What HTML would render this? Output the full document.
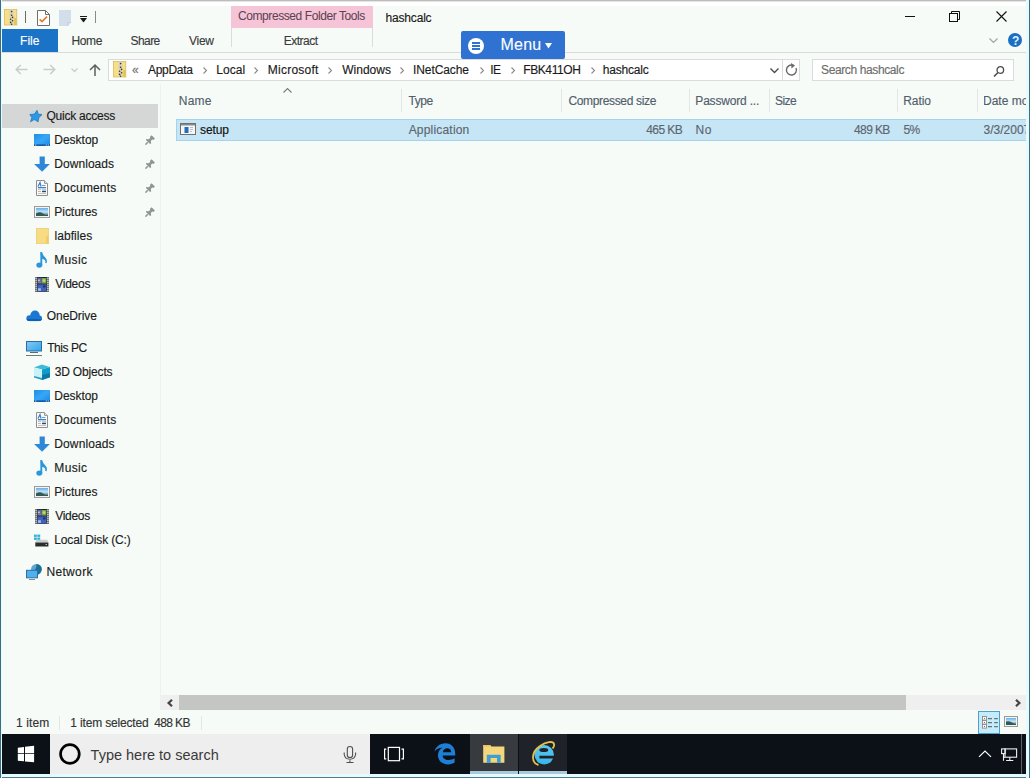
<!DOCTYPE html>
<html><head><meta charset="utf-8">
<style>
*{box-sizing:border-box;margin:0;padding:0}
html,body{width:1030px;height:778px;overflow:hidden;background:#f6fbf8;font-family:"Liberation Sans",sans-serif;font-size:12px;color:#1e1e1e}
.a{position:absolute;white-space:nowrap}
.t{position:absolute;white-space:nowrap;line-height:1;font-size:11.5px;-webkit-text-stroke:0.15px currentColor}
svg{position:absolute;overflow:visible}
.nv{color:#1b1b1b}
.hd{color:#4d5f73}
.sep{position:absolute;width:1px;background:#e3e6e5}
</style></head><body>
<svg width="0" height="0" style="position:absolute;left:0;top:0">
<defs>
<linearGradient id="g-sky" x1="0" y1="0" x2="0" y2="1"><stop offset="0" stop-color="#5fb0f0"/><stop offset="0.5" stop-color="#c9e3f4"/><stop offset="1" stop-color="#2f5a55"/></linearGradient>
<linearGradient id="g-desk" x1="0" y1="0" x2="1" y2="1"><stop offset="0" stop-color="#1f8fe8"/><stop offset="0.5" stop-color="#36a6f6"/><stop offset="1" stop-color="#1d86e2"/></linearGradient>
<linearGradient id="g-scr" x1="0" y1="0" x2="1" y2="1"><stop offset="0" stop-color="#8cc8f2"/><stop offset="1" stop-color="#2aa6ee"/></linearGradient>
<symbol id="i-star" viewBox="0 0 16 16"><path d="M11 2.3L12.4 6.2L16.2 6.5L12.9 9.6L12.1 13.8L8.3 11.6L4.5 13.8L5.8 9.5L3.8 6.5L8.4 6.1Z" fill="#2a98e4" stroke="#1b73bf" stroke-width="0.7"/><path d="M5.5 4.5L8 3" stroke="#a6cbe8" stroke-width="0.8"/></symbol>
<symbol id="i-desktop" viewBox="0 0 16 16"><rect x="0" y="2" width="16" height="12" fill="url(#g-desk)"/><rect x="0" y="12.4" width="16" height="1.6" fill="#105aa6"/><rect x="1.3" y="12.6" width="1" height="1" fill="#d8f0ff"/><rect x="11.8" y="12.6" width="1" height="1" fill="#d8f0ff"/><rect x="13.8" y="12.6" width="1" height="1" fill="#d8f0ff"/></symbol>
<symbol id="i-down" viewBox="0 0 16 16"><path d="M5.6 0.4H10.8V8H15.9L8.1 15.8L0.1 8H5.6Z" fill="#2d88d8"/></symbol>
<symbol id="i-docs" viewBox="0 0 16 16"><path d="M2.5 0.5H10.5L13.5 3.5V15.5H2.5Z" fill="#fbfbfb" stroke="#8f8f8f"/><path d="M10.5 0.5V3.5H13.5" fill="#e0e0e0" stroke="#9f9f9f"/><path d="M4 6.5L6 2.5L7 6.5" fill="none" stroke="#3a7fc0" stroke-width="1.2"/><rect x="8" y="5" width="3.5" height="1" fill="#6aa0d0"/><rect x="4" y="7" width="8" height="1.3" fill="#3a80bd"/><rect x="4" y="9.2" width="3" height="0.9" fill="#a9bdcc"/><rect x="8" y="9.2" width="4" height="0.9" fill="#a9bdcc"/><rect x="4" y="11" width="3" height="0.9" fill="#d0a8a0"/><rect x="8" y="10.7" width="4" height="1.5" fill="#26506c"/><rect x="4" y="13" width="8" height="0.8" fill="#b5b5b5"/></symbol>
<symbol id="i-pics" viewBox="0 0 16 16"><rect x="0.5" y="2.5" width="15" height="11" fill="#f4f4f4" stroke="#9a9a9a"/><rect x="2" y="4" width="12" height="8" fill="url(#g-sky)"/><path d="M2 9.5Q6 7 9 9.5T14 10.5V12H2Z" fill="#2f5a55"/></symbol>
<symbol id="i-folder" viewBox="0 0 16 16"><rect x="2.3" y="0.3" width="12.2" height="15.5" fill="#f8dc84" stroke="#e9c766" stroke-width="0.6"/><path d="M12.2 8.5L14.5 6.8V15.8H12.2Z" fill="#efcc62"/></symbol>
<symbol id="i-music" viewBox="0 0 16 16"><ellipse cx="5.3" cy="13.1" rx="3" ry="2.7" fill="#2a96dc"/><path d="M7.3 13.5V0.3" stroke="#2a96dc" stroke-width="1.9"/><path d="M6.4 0.3H8Q9 3.5 11.3 5.5Q13.8 7.8 12.5 11.2L11.2 11Q12 8.8 10 7.6Q8.6 6.8 7.3 6.4Z" fill="#2a96dc"/></symbol>
<symbol id="i-videos" viewBox="0 0 16 16"><rect x="1" y="1" width="14" height="14.8" fill="#1b2230"/><rect x="1" y="1" width="2.2" height="14.8" fill="#737a74"/><rect x="12.8" y="1" width="2.2" height="14.8" fill="#737a74"/><g fill="#e8e8e8"><rect x="1.6" y="2" width="1" height="1"/><rect x="1.6" y="4" width="1" height="1"/><rect x="1.6" y="6" width="1" height="1"/><rect x="1.6" y="8" width="1" height="1"/><rect x="1.6" y="10" width="1" height="1"/><rect x="1.6" y="12" width="1" height="1"/><rect x="1.6" y="14" width="1" height="1"/><rect x="13.4" y="2" width="1" height="1"/><rect x="13.4" y="4" width="1" height="1"/><rect x="13.4" y="6" width="1" height="1"/><rect x="13.4" y="8" width="1" height="1"/><rect x="13.4" y="10" width="1" height="1"/><rect x="13.4" y="12" width="1" height="1"/><rect x="13.4" y="14" width="1" height="1"/></g><rect x="3.6" y="1.8" width="4.2" height="5.8" fill="#5a6c9a"/><rect x="3.9" y="3.5" width="2" height="1.5" fill="#b8c0e0"/><rect x="3.9" y="5.5" width="3" height="1.2" fill="#c07080"/><rect x="7.8" y="2" width="4.6" height="5.6" fill="#7aa048"/><circle cx="10" cy="4.6" r="1.5" fill="#b5d87a"/><rect x="3.6" y="8.4" width="8.8" height="6.8" fill="#3d62c0"/><rect x="3.9" y="12.3" width="3" height="2.5" fill="#a8c0f0"/><rect x="9" y="9.5" width="2.5" height="1.8" fill="#1c2a60"/></symbol>
<symbol id="i-cloud" viewBox="0 0 16 16"><g fill="#1a78d2"><circle cx="3.3" cy="10.2" r="2.9"/><circle cx="9" cy="7.3" r="4.7"/><circle cx="13.2" cy="10.3" r="2.8"/><rect x="3.3" y="9" width="9.9" height="4.1"/></g><path d="M0.5 11A2.9 2.9 0 0 0 3.3 13.1H13.2A2.8 2.8 0 0 0 15.9 11Z" fill="#0f5fb4"/></symbol>
<symbol id="i-pc" viewBox="0 0 16 16"><rect x="0.5" y="1.5" width="15" height="9.5" fill="url(#g-scr)" stroke="#2d6e9e"/><rect x="4" y="12" width="8" height="1" fill="#5a6a74"/><rect x="0" y="15" width="16" height="1.2" fill="#707a7a"/></symbol>
<symbol id="i-cube" viewBox="0 0 16 16"><path d="M0 3.5L7.8 0.5L16 3L8 5.5Z" fill="#3fbad6"/><path d="M0 3.5L8 5.5V16L0 13.5Z" fill="#c8f2fa"/><path d="M16 3L8 5.5V16L16 13.2Z" fill="#0f9ccb"/><path d="M8 11L16 9V13.2L8 16Z" fill="#0b78a6"/><path d="M0 12L8 14V16L0 13.5Z" fill="#2aa0c0"/></symbol>
<symbol id="i-disk" viewBox="0 0 16 16"><g fill="#2cb3d8"><rect x="0" y="2.6" width="2.8" height="2.3"/><rect x="3.3" y="2.6" width="2.9" height="2.3"/><rect x="0" y="5.5" width="2.8" height="2.4"/><rect x="3.3" y="5.5" width="2.9" height="2.4"/></g><path d="M2.5 7.8H13.2L14.4 10.5H1.3Z" fill="#c9cdcb"/><rect x="1.3" y="10.5" width="13.1" height="4" fill="#2a2f2e"/><rect x="11.5" y="12" width="1.5" height="1" fill="#9fd38a"/></symbol>
<symbol id="i-network" viewBox="0 0 16 16"><circle cx="10.4" cy="5.4" r="5.4" fill="#5aa7d2"/><path d="M10.4 0A5.4 5.4 0 0 1 15.8 5.4Q15 9 12 10.5L9 6Q11 3 10.4 0Z" fill="#1f6f93"/><rect x="0.5" y="6.3" width="11" height="7.5" fill="#4fb0ef" stroke="#2a6fa6"/><rect x="3" y="15" width="6" height="1" fill="#7c8d99"/></symbol>
<symbol id="i-pin" viewBox="0 0 10 10"><path d="M6.6 0.3L9.9 3.5L8.2 5L7.2 4.6L5.8 6.1L6.2 8.3L5.1 9L0.9 4.9L1.5 3.9L3.8 4.3L5.3 2.8L5 1.8Z" fill="#8b9794"/><path d="M2.8 7.2L0.4 9.6" stroke="#8b9794" stroke-width="1.5"/></symbol>
</defs></svg>

<!-- window borders -->
<div class="a" style="left:0;top:0;width:1030px;height:1px;background:#bdbdbd"></div>
<div class="a" style="left:0;top:1px;width:1030px;height:1px;background:#e4e4e4"></div>
<div class="a" style="left:0;top:2px;width:1030px;height:4px;background:#ffffff"></div>

<!-- ===== TITLE BAR ===== -->
<!-- zip icon -->
<svg style="left:4px;top:9px" width="14" height="17" viewBox="0 0 14 17">
 <rect x="0.4" y="0.4" width="12.4" height="15.6" fill="#f7de88" stroke="#d8bd5c" stroke-width="0.8"/>
 <rect x="10.2" y="9" width="2.4" height="6.8" fill="#e3c356"/>
 <rect x="5.6" y="0.4" width="3.8" height="15.6" fill="#d6d0bb"/>
 <g fill="#3a3626"><circle cx="7.6" cy="2.6" r="0.8"/><circle cx="7.6" cy="6.3" r="0.8"/><circle cx="8.6" cy="8.4" r="0.8"/><circle cx="6.6" cy="10.2" r="0.8"/><circle cx="8.6" cy="11.8" r="0.8"/><circle cx="6.6" cy="13.4" r="0.8"/><circle cx="7.6" cy="15.2" r="0.8"/></g>
</svg>
<div class="a" style="left:25px;top:11px;width:1px;height:12px;background:#6c6c6c"></div>
<!-- check doc -->
<svg style="left:37px;top:10px" width="13" height="16" viewBox="0 0 13 16">
 <path d="M0.5 0.5H8.5L12.5 4.5V15.5H0.5Z" fill="#fff" stroke="#6e6e6e"/>
 <path d="M8.5 0.5V4.5H12.5" fill="none" stroke="#6e6e6e"/>
 <path d="M2.6 9.3L5 11.6L10 6.6" fill="none" stroke="#e07b30" stroke-width="1.6"/>
</svg>
<!-- blank doc -->
<svg style="left:59px;top:10px" width="13" height="16" viewBox="0 0 13 16">
 <path d="M0 0H12V12L9 16H0Z" fill="#d3deeb"/>
 <path d="M9 16V12.5H12" fill="none" stroke="#c2cfdf"/>
</svg>
<!-- qat dropdown -->
<div class="a" style="left:80px;top:16px;width:7px;height:1px;background:#1a1a1a"></div>
<svg style="left:80px;top:18px" width="7" height="5" viewBox="0 0 7 5"><path d="M0 0H7L3.5 4.5Z" fill="#1a1a1a"/></svg>
<div class="a" style="left:95px;top:11px;width:1px;height:12px;background:#8a8a8a"></div>

<div class="a" style="left:231px;top:6px;width:142px;height:22px;background:#f5c5d7"></div>

<!-- window controls -->
<div class="a" style="left:905px;top:16px;width:10px;height:1px;background:#111"></div>
<svg style="left:949px;top:11px" width="11" height="11" viewBox="0 0 11 11">
 <rect x="0.5" y="2.5" width="8" height="8" fill="none" stroke="#111"/>
 <path d="M2.5 2.5V0.5H10.5V8.5H8.5" fill="none" stroke="#111"/>
</svg>
<svg style="left:996px;top:11px" width="11" height="11" viewBox="0 0 11 11">
 <path d="M0.5 0.5L10.5 10.5M10.5 0.5L0.5 10.5" stroke="#111" stroke-width="1.1"/>
</svg>

<!-- ===== RIBBON TABS ===== -->
<div class="a" style="left:2px;top:29px;width:56px;height:23px;background:#1a73c6"></div>
<div class="a" style="left:231px;top:28px;width:1px;height:19px;background:#dcdcdc"></div>
<div class="a" style="left:372px;top:28px;width:1px;height:19px;background:#dcdcdc"></div>
<div class="a" style="left:2px;top:52px;width:1024px;height:1px;background:#dadada"></div>
<!-- ribbon collapse + help -->
<svg style="left:988.5px;top:38px" width="10" height="6" viewBox="0 0 10 6"><path d="M0.5 0.5L4.5 4.5L8.5 0.5" fill="none" stroke="#a3a3a3" stroke-width="1.2"/></svg>
<div class="a" style="left:1008px;top:33px;width:14px;height:14px;border-radius:50%;background:#1b6fc2"></div>

<!-- Menu button -->
<div class="a" style="left:461px;top:31px;width:104px;height:28px;background:#2f72d1;border-radius:2px"></div>
<div class="a" style="left:468px;top:37.5px;width:16px;height:16px;background:#fff;border-radius:50%"></div>
<div class="a" style="left:472px;top:41.5px;width:8px;height:2px;background:#2f72d1"></div>
<div class="a" style="left:472px;top:44.5px;width:8px;height:2px;background:#2f72d1"></div>
<div class="a" style="left:472px;top:47.5px;width:8px;height:2px;background:#2f72d1"></div>
<svg style="left:545px;top:43px" width="7" height="6" viewBox="0 0 7 6"><path d="M0 0H7L3.5 5.5Z" fill="#fff"/></svg>

<!-- ===== NAV / ADDRESS ===== -->
<svg style="left:15px;top:64px" width="13" height="11" viewBox="0 0 13 11"><path d="M12.5 5.5H1.2M5.8 1L1.2 5.5L5.8 10" fill="none" stroke="#c9cccb" stroke-width="1.5"/></svg>
<svg style="left:43px;top:64px" width="13" height="11" viewBox="0 0 13 11"><path d="M0.5 5.5H11.8M7.2 1L11.8 5.5L7.2 10" fill="none" stroke="#c9cccb" stroke-width="1.5"/></svg>
<svg style="left:71px;top:68px" width="7" height="4" viewBox="0 0 7 4"><path d="M0.5 0.5L3.5 3.5L6.5 0.5" fill="none" stroke="#c9cccb" stroke-width="1.3"/></svg>
<svg style="left:89px;top:64px" width="12" height="12" viewBox="0 0 12 12"><path d="M6 12V1M1 6L6 1L11 6" fill="none" stroke="#5f5f5f" stroke-width="1.5"/></svg>

<div class="a" style="left:108px;top:59px;width:675px;height:22px;border:1px solid #d9dcdb;background:#fff"></div>
<div class="a" style="left:782px;top:59px;width:18px;height:22px;border:1px solid #d9dcdb;background:#fff"></div>
<!-- addr zip icon -->
<svg style="left:112.5px;top:60.8px" width="14" height="17" viewBox="0 0 14 17">
 <rect x="0.4" y="0.4" width="12.4" height="15.6" fill="#f7de88" stroke="#d8bd5c" stroke-width="0.8"/>
 <rect x="10.2" y="9" width="2.4" height="6.8" fill="#e3c356"/>
 <rect x="5.6" y="0.4" width="3.8" height="15.6" fill="#d6d0bb"/>
 <g fill="#3a3626"><circle cx="7.6" cy="2.6" r="0.8"/><circle cx="7.6" cy="6.3" r="0.8"/><circle cx="8.6" cy="8.4" r="0.8"/><circle cx="6.6" cy="10.2" r="0.8"/><circle cx="8.6" cy="11.8" r="0.8"/><circle cx="6.6" cy="13.4" r="0.8"/><circle cx="7.6" cy="15.2" r="0.8"/></g>
</svg>
<svg style="left:0;top:0" width="1030" height="90">
 <g fill="none" stroke="#8a8a8a" stroke-width="1.1">
  <path d="M203.5 67.5L206.5 70.5L203.5 73.5"/>
  <path d="M254.5 67.5L257.5 70.5L254.5 73.5"/>
  <path d="M328.5 67.5L331.5 70.5L328.5 73.5"/>
  <path d="M400.5 67.5L403.5 70.5L400.5 73.5"/>
  <path d="M480.5 67.5L483.5 70.5L480.5 73.5"/>
  <path d="M511.5 67.5L514.5 70.5L511.5 73.5"/>
  <path d="M591.5 67.5L594.5 70.5L591.5 73.5"/>
 </g>
 <path d="M770.5 68.5L774.5 72.5L778.5 68.5" fill="none" stroke="#4a4a4a" stroke-width="1.3"/>
 <path d="M796 68A5 5 0 1 1 793 65.3" fill="none" stroke="#6a6a6a" stroke-width="1.4"/>
 <path d="M791 63L795 65.5L791.5 68.5Z" fill="#6a6a6a"/>
</svg>

<div class="a" style="left:812px;top:59px;width:202px;height:22px;border:1px solid #d9dcdb;background:#fff"></div>
<svg style="left:993px;top:66px" width="12" height="11" viewBox="0 0 12 11"><circle cx="7.3" cy="4" r="3.3" fill="none" stroke="#4a4a4a" stroke-width="1.3"/><path d="M5 6.5L1 10.5" stroke="#4a4a4a" stroke-width="1.6"/></svg>

<!-- ===== NAV PANE ===== -->
<div class="a" style="left:2px;top:104px;width:156px;height:24px;background:#d5d7d6"></div>
<div class="a" style="left:160px;top:84px;width:1px;height:626px;background:#edf1ef"></div>
<svg style="left:26px;top:108px" width="16" height="16"><use href="#i-star"/></svg>
<svg style="left:34px;top:132px" width="16" height="16"><use href="#i-desktop"/></svg>
<svg style="left:145px;top:135px" width="10" height="10"><use href="#i-pin"/></svg>
<svg style="left:34px;top:156px" width="16" height="16"><use href="#i-down"/></svg>
<svg style="left:145px;top:159px" width="10" height="10"><use href="#i-pin"/></svg>
<svg style="left:34px;top:180px" width="16" height="16"><use href="#i-docs"/></svg>
<svg style="left:145px;top:183px" width="10" height="10"><use href="#i-pin"/></svg>
<svg style="left:34px;top:204px" width="16" height="16"><use href="#i-pics"/></svg>
<svg style="left:145px;top:207px" width="10" height="10"><use href="#i-pin"/></svg>
<svg style="left:34px;top:228px" width="16" height="16"><use href="#i-folder"/></svg>
<svg style="left:34px;top:252px" width="16" height="16"><use href="#i-music"/></svg>
<svg style="left:34px;top:276px" width="16" height="16"><use href="#i-videos"/></svg>
<svg style="left:26px;top:308px" width="16" height="16"><use href="#i-cloud"/></svg>
<svg style="left:26px;top:340px" width="16" height="16"><use href="#i-pc"/></svg>
<svg style="left:34px;top:364px" width="16" height="16"><use href="#i-cube"/></svg>
<svg style="left:34px;top:388px" width="16" height="16"><use href="#i-desktop"/></svg>
<svg style="left:34px;top:412px" width="16" height="16"><use href="#i-docs"/></svg>
<svg style="left:34px;top:436px" width="16" height="16"><use href="#i-down"/></svg>
<svg style="left:34px;top:460px" width="16" height="16"><use href="#i-music"/></svg>
<svg style="left:34px;top:484px" width="16" height="16"><use href="#i-pics"/></svg>
<svg style="left:34px;top:508px" width="16" height="16"><use href="#i-videos"/></svg>
<svg style="left:34px;top:532px" width="16" height="16"><use href="#i-disk"/></svg>
<svg style="left:26px;top:564px" width="16" height="16"><use href="#i-network"/></svg>

<!-- ===== COLUMN HEADERS ===== -->
<svg style="left:283px;top:88px" width="9" height="5" viewBox="0 0 9 5"><path d="M0.5 4.5L4.5 0.5L8.5 4.5" fill="none" stroke="#7a7a7a" stroke-width="1.1"/></svg>
<div class="sep" style="left:401px;top:89px;height:23px"></div>
<div class="sep" style="left:561px;top:89px;height:23px"></div>
<div class="sep" style="left:689px;top:89px;height:23px"></div>
<div class="sep" style="left:769px;top:89px;height:23px"></div>
<div class="sep" style="left:897px;top:89px;height:23px"></div>
<div class="sep" style="left:977px;top:89px;height:23px"></div>

<!-- ===== SELECTED ROW ===== -->
<div class="a" style="left:176px;top:119px;width:852px;height:22px;background:#c6e5f5;border:1px solid #a3d4ee"></div>


<!-- row content -->
<svg style="left:180px;top:123px" width="16" height="12" viewBox="0 0 16 12"><rect x="0.5" y="0.5" width="15" height="11" fill="#f7f7f7" stroke="#6f6f6f"/><rect x="1" y="1" width="14" height="1.5" fill="#8a8a8a"/><rect x="4.5" y="4" width="4" height="6" fill="#1e6fbf"/><path d="M10 4.5H13M10 6.5H13M10 8.5H12" stroke="#b8b8b8" stroke-width="0.9"/></svg>

<!-- ===== SCROLLBAR ===== -->
<div class="a" style="left:161px;top:695px;width:865px;height:15px;background:#efefef"></div>
<div class="a" style="left:179px;top:695px;width:727px;height:15px;background:#c4c6c3"></div>
<svg style="left:167px;top:699px" width="6" height="8" viewBox="0 0 6 8"><path d="M5 0.8L1.6 4L5 7.2" fill="none" stroke="#454545" stroke-width="2.2"/></svg>
<svg style="left:1015px;top:699px" width="6" height="8" viewBox="0 0 6 8"><path d="M1 0.8L4.4 4L1 7.2" fill="none" stroke="#454545" stroke-width="2.2"/></svg>

<!-- ===== STATUS BAR ===== -->
<div class="a" style="left:59px;top:716px;width:1px;height:14px;background:#e3e6e5"></div>
<div class="a" style="left:201px;top:716px;width:1px;height:14px;background:#e3e6e5"></div>

<!-- view buttons -->
<div class="a" style="left:978px;top:711px;width:22px;height:23px;background:#c6ecfb;border:1px solid #4c9fcf"></div>
<svg style="left:978px;top:711px" width="22" height="23" viewBox="0 0 22 23">
 <g fill="#fff" stroke="#8a8a8a" stroke-width="0.9"><rect x="4.5" y="5.5" width="4" height="3.6"/><rect x="4.5" y="9.5" width="4" height="3.6"/><rect x="4.5" y="13.5" width="4" height="3.6"/></g>
 <circle cx="6.5" cy="7.3" r="0.6" fill="#666"/><circle cx="6.5" cy="11.3" r="0.6" fill="#666"/><circle cx="6.5" cy="15.3" r="0.6" fill="#c03040"/>
 <path d="M10 7.6H14M16.2 7.6H19.8M10 11.6H14M16.2 11.6H19.8M10 15.6H14M16.2 15.6H19.8" stroke="#5f7575" stroke-width="1.1"/>
</svg>
<svg style="left:1004px;top:716px" width="14" height="11" viewBox="0 0 14 11">
 <rect x="0.5" y="0.5" width="13" height="10" fill="#f6f6f6" stroke="#9a9a9a"/>
 <rect x="2" y="2" width="10" height="7" fill="url(#g-sky)"/>
 <path d="M2 5.5Q5 4.5 8 6.5T12 8V9H2Z" fill="#2f5a55"/>
</svg>
<!-- ===== TASKBAR ===== -->
<div class="a" style="left:2px;top:734px;width:1024px;height:40px;background:#0b1117"></div>
<div class="a" style="left:50px;top:734px;width:320px;height:40px;background:#eeeeee"></div>
<svg style="left:0;top:734px" width="1030" height="44" viewBox="0 734 1030 44">
 <path d="M17.8 747.7L24 747V753H17.8ZM25 746.8L34.1 745.8V753H25ZM17.8 753.8H24V761.3L17.8 760.8ZM25 753.8H34.1V762.3L25 761.5Z" fill="#ffffff"/>
 <circle cx="69.9" cy="754" r="9.35" fill="none" stroke="#000" stroke-width="2.7"/>
 <g fill="none" stroke="#4f4f4f" stroke-width="1.1">
  <rect x="347.3" y="746.5" width="5.3" height="11" rx="2.6"/>
  <path d="M344.2 752.5V754.5A5.8 5.8 0 0 0 355.6 754.5V752.5M349.9 760.3V762.3M346.5 762.5H353.5"/>
 </g>
 <g fill="none" stroke="#ffffff" stroke-width="1.2">
  <rect x="388.3" y="747.4" width="11.2" height="13.3"/>
  <path d="M386.3 749.2H384.6V758.8H386.3M401.5 749.2H403.4V758.8H401.5"/>
 </g>
 <rect x="470" y="734" width="48" height="37" fill="#373a3e"/>
 <rect x="470" y="771" width="48" height="3" fill="#a9c9df"/>
 <rect x="519" y="734" width="48" height="37" fill="#1f2329"/>
 <rect x="519" y="771" width="48" height="3" fill="#a9c9df"/>
 <path d="M483.2 745H490L491.5 746.5H504.4V762.8H483.2Z" fill="#f4d77c"/>
 <path d="M483.2 745H490L491.5 746.5H483.2Z" fill="#e9c35a"/>
 <path d="M486.8 754.8H500.7V762.8H497V758H490.6V762.8H486.8Z" fill="#3d9fd6"/>
 <path d="M979 756.9L985 751.1L991 756.9" fill="none" stroke="#fff" stroke-width="1.2"/>
 <g fill="none" stroke="#f0f0f0" stroke-width="1.1">
  <rect x="1005" y="748.9" width="11.6" height="8.3"/>
  <rect x="1001.6" y="748.9" width="3.6" height="4.7"/>
  <path d="M1003.5 753.6V760.8M1003.5 757.2H1005M1009.8 757.2V760.3M1006.1 760.5H1013.3"/>
 </g>
 <rect x="1021" y="734" width="1" height="40" fill="#5c6166"/>
</svg>
<!-- edge e -->
<svg style="left:434px;top:742px" width="22" height="23" viewBox="0 0 22 23">
 <path d="M11.5 1.2C5.5 1.2 1 5.5 0.6 9.5C2.5 6.8 5.5 5.6 8.5 5.8C5.3 7.3 4 10.2 4 13.2C4 18.8 8.5 22.4 14 22.4C16.7 22.4 19 21.7 20.6 20.6V16.2C19 17.2 16.8 17.9 14.6 17.9C11.2 17.9 8.8 16.3 8.6 13.4H21.2V11.6C21.2 5.5 17.4 1.2 11.5 1.2ZM8.8 10.2C9.2 7.9 11 6.3 13.3 6.3C15.6 6.3 17.2 7.8 17.2 10.2Z" fill="#1e7fd6"/>
</svg>
<!-- IE -->
<svg style="left:530px;top:741px" width="26" height="25" viewBox="0 0 26 25">
 <defs><linearGradient id="g-ie" x1="0" y1="0" x2="0" y2="1"><stop offset="0" stop-color="#5cc8f0"/><stop offset="1" stop-color="#3ab4ea"/></linearGradient></defs>
 <circle cx="14.2" cy="13.8" r="9.7" fill="url(#g-ie)"/>
 <ellipse cx="13.8" cy="9" rx="4.5" ry="2" fill="#1f2329"/>
 <path d="M9.6 14.7H25V17.6H9.6Q9 16.2 9.6 14.7Z" fill="#1f2329"/>
 <path d="M8.5 24C1 22 1 11 10 5C16 1 23 -0.5 24 3C24.5 5 23.5 6.5 22.5 7.5" fill="none" stroke="#e3c04a" stroke-width="1.9"/>
</svg>
<div class="a" style="left:0;top:774px;width:1030px;height:3px;background:#e6fbff"></div>
<div class="a" style="left:0;top:777px;width:1030px;height:1px;background:#4d7d8c"></div>

<div class="t" style="left:237.99px;top:10.00px;font-size:12px;color:#5e4252;letter-spacing:-0.416px;-webkit-text-stroke:0.05px #5e4252">Compressed Folder Tools</div>
<div class="t" style="left:385.57px;top:12.00px;font-size:12px;color:#1a1a1a;letter-spacing:-0.187px">hashcalc</div>
<div class="t" style="left:20.12px;top:35.00px;font-size:12px;color:#ffffff;letter-spacing:-0.037px">File</div>
<div class="t" style="left:71.42px;top:35.00px;font-size:12px;color:#3b3b3b;letter-spacing:-0.363px">Home</div>
<div class="t" style="left:130.59px;top:35.00px;font-size:12px;color:#3b3b3b;letter-spacing:-0.600px">Share</div>
<div class="t" style="left:188.95px;top:35.00px;font-size:12px;color:#3b3b3b;letter-spacing:-0.257px">View</div>
<div class="t" style="left:283.72px;top:35.00px;font-size:12px;color:#3b3b3b;letter-spacing:-0.512px">Extract</div>
<div class="t" style="left:500.39px;top:37.00px;font-size:16px;color:#ffffff;letter-spacing:0.283px;-webkit-text-stroke:0.1px #fff">Menu</div>
<div class="t" style="left:132.02px;top:64.00px;font-size:12px;color:#707070">«</div>
<div class="t" style="left:147.98px;top:64.00px;font-size:12px;color:#1b1b1b;letter-spacing:-0.280px">AppData</div>
<div class="t" style="left:216.22px;top:64.00px;font-size:12px;color:#1b1b1b;letter-spacing:0.075px">Local</div>
<div class="t" style="left:267.82px;top:64.00px;font-size:12px;color:#1b1b1b;letter-spacing:0.237px">Microsoft</div>
<div class="t" style="left:342.15px;top:64.00px;font-size:12px;color:#1b1b1b;letter-spacing:0.035px">Windows</div>
<div class="t" style="left:413.00px;top:64.00px;font-size:12px;color:#1b1b1b;letter-spacing:-0.094px">INetCache</div>
<div class="t" style="left:490.34px;top:64.00px;font-size:12px;color:#1b1b1b;letter-spacing:-0.600px">IE</div>
<div class="t" style="left:523.22px;top:64.00px;font-size:12px;color:#1b1b1b;letter-spacing:-0.400px">FBK411OH</div>
<div class="t" style="left:602.67px;top:64.00px;font-size:12px;color:#1b1b1b;letter-spacing:-0.187px">hashcalc</div>
<div class="t" style="left:821.06px;top:64.00px;font-size:12px;color:#6d6d6d;letter-spacing:-0.383px">Search hashcalc</div>
<div class="t" style="left:178.72px;top:95.00px;font-size:12px;color:#525e6b;letter-spacing:0.270px">Name</div>
<div class="t" style="left:408.43px;top:95.00px;font-size:12px;color:#525e6b;letter-spacing:-0.433px">Type</div>
<div class="t" style="left:568.39px;top:95.00px;font-size:12px;color:#525e6b;letter-spacing:-0.339px">Compressed size</div>
<div class="t" style="left:695.32px;top:95.00px;font-size:12px;color:#525e6b;letter-spacing:-0.185px">Password ...</div>
<div class="t" style="left:775.08px;top:95.00px;font-size:12px;color:#525e6b;letter-spacing:-0.600px">Size</div>
<div class="t" style="left:903.32px;top:95.00px;font-size:12px;color:#525e6b;letter-spacing:-0.105px">Ratio</div>
<div class="a" style="left:984px;top:90px;width:42px;height:22px;overflow:hidden"><div class="t" style="left:-0.98px;top:5.00px;font-size:12px;color:#525e6b">Date modified</div></div>
<div class="t" style="left:199.97px;top:124.00px;font-size:12px;color:#111111;letter-spacing:-0.078px">setup</div>
<div class="t" style="left:408.68px;top:124.00px;font-size:12px;color:#5c6670;letter-spacing:0.190px">Application</div>
<div class="t" style="left:646.31px;top:124.00px;font-size:12px;color:#5c6670;letter-spacing:-0.600px">465 KB</div>
<div class="t" style="left:695.59px;top:124.00px;font-size:12px;color:#5c6670;letter-spacing:0.600px">No</div>
<div class="t" style="left:854.00px;top:124.00px;font-size:12px;color:#5c6670;letter-spacing:-0.600px">489 KB</div>
<div class="t" style="left:903.51px;top:124.00px;font-size:12px;color:#5c6670;letter-spacing:-0.600px">5%</div>
<div class="a" style="left:984px;top:119px;width:42px;height:22px;overflow:hidden"><div class="t" style="left:-0.46px;top:5.00px;font-size:12px;color:#5c6670">3/3/2007</div></div>
<div class="t" style="left:46.43px;top:110.00px;font-size:12px;color:#1b1b1b;letter-spacing:-0.223px">Quick access</div>
<div class="t" style="left:54.32px;top:134.00px;font-size:12px;color:#1b1b1b;letter-spacing:-0.022px">Desktop</div>
<div class="t" style="left:54.32px;top:158.00px;font-size:12px;color:#1b1b1b;letter-spacing:0.044px">Downloads</div>
<div class="t" style="left:54.32px;top:182.00px;font-size:12px;color:#1b1b1b;letter-spacing:0.141px">Documents</div>
<div class="t" style="left:54.32px;top:206.00px;font-size:12px;color:#1b1b1b;letter-spacing:-0.047px">Pictures</div>
<div class="t" style="left:54.49px;top:230.00px;font-size:12px;color:#1b1b1b;letter-spacing:0.057px">labfiles</div>
<div class="t" style="left:54.32px;top:254.00px;font-size:12px;color:#1b1b1b;letter-spacing:0.315px">Music</div>
<div class="t" style="left:55.25px;top:278.00px;font-size:12px;color:#1b1b1b;letter-spacing:-0.258px">Videos</div>
<div class="t" style="left:46.83px;top:310.00px;font-size:12px;color:#1b1b1b;letter-spacing:-0.081px">OneDrive</div>
<div class="t" style="left:47.13px;top:342.00px;font-size:12px;color:#1b1b1b;letter-spacing:-0.440px">This PC</div>
<div class="t" style="left:54.64px;top:366.00px;font-size:12px;color:#1b1b1b;letter-spacing:-0.151px">3D Objects</div>
<div class="t" style="left:54.32px;top:390.00px;font-size:12px;color:#1b1b1b;letter-spacing:-0.055px">Desktop</div>
<div class="t" style="left:54.32px;top:414.00px;font-size:12px;color:#1b1b1b;letter-spacing:0.141px">Documents</div>
<div class="t" style="left:54.32px;top:438.00px;font-size:12px;color:#1b1b1b;letter-spacing:0.106px">Downloads</div>
<div class="t" style="left:54.32px;top:462.00px;font-size:12px;color:#1b1b1b;letter-spacing:0.340px">Music</div>
<div class="t" style="left:54.32px;top:486.00px;font-size:12px;color:#1b1b1b;letter-spacing:-0.019px">Pictures</div>
<div class="t" style="left:55.25px;top:510.00px;font-size:12px;color:#1b1b1b;letter-spacing:-0.298px">Videos</div>
<div class="t" style="left:54.32px;top:534.00px;font-size:12px;color:#1b1b1b;letter-spacing:-0.167px">Local Disk (C:)</div>
<div class="t" style="left:46.42px;top:566.00px;font-size:12px;color:#1b1b1b;letter-spacing:0.343px">Network</div>
<div class="t" style="left:15.89px;top:717.00px;font-size:12px;color:#333333;letter-spacing:0.126px">1 item</div>
<div class="t" style="left:70.29px;top:717.00px;font-size:12px;color:#333333;letter-spacing:-0.165px">1 item selected</div>
<div class="t" style="left:154.15px;top:717.00px;font-size:12px;color:#333333;letter-spacing:-0.600px">488 KB</div>
<div class="t" style="left:90.58px;top:748.00px;font-size:14.5px;color:#3a3a3a;-webkit-text-stroke:0">Type here to search</div>
<div class="t" style="left:1012.05px;top:35.00px;font-size:12px;color:#e0f0ff;font-weight:bold;-webkit-text-stroke:0">?</div>
<!-- side borders -->
<div class="a" style="left:0;top:0;width:1px;height:778px;background:#3d6e80"></div>
<div class="a" style="left:1px;top:0;width:1px;height:778px;background:#e6fbff"></div>
<div class="a" style="left:1026px;top:0;width:3px;height:778px;background:#e6fbff"></div>
<div class="a" style="left:1029px;top:0;width:1px;height:778px;background:#3d6e80"></div>
</body></html>
